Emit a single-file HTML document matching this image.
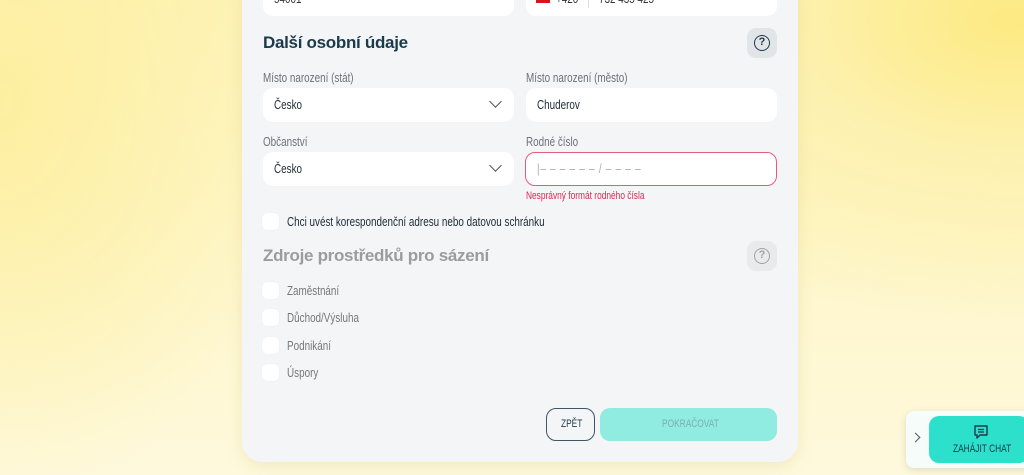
<!DOCTYPE html>
<html><head><meta charset="utf-8"><style>
*{box-sizing:border-box;margin:0;padding:0}
body{width:1024px;height:475px;overflow:hidden;position:relative;font-family:"Liberation Sans",sans-serif;
background:radial-gradient(ellipse 500px 300px at 1010px 20px,#fdea82 0%,#fdf1b0 45%,rgba(253,246,200,0) 100%),radial-gradient(ellipse 300px 400px at 0px 100px,#fdefa0 0%,rgba(253,246,200,0) 100%),linear-gradient(180deg,#fdf3b8 0%,#fef9dc 100%);}
.card{position:absolute;left:242px;top:-40px;width:556px;height:502px;background:#f4f5f7;border-radius:20px;box-shadow:0 4px 14px rgba(200,190,120,.25)}
.n{display:inline-block;transform:scaleX(.76);transform-origin:0 50%;white-space:nowrap}
.in{position:absolute;height:34px;background:#fff;border-radius:10px;font-size:13px;color:#1d2b36;padding-left:11px;line-height:34px}
.lbl{position:absolute;font-size:13px;color:#6b7177}
.chev{position:absolute;right:14px;top:9px;width:9px;height:9px;border-right:1.3px solid #555;border-bottom:1.3px solid #555;transform:rotate(45deg)}
h2{position:absolute;font-family:"Liberation Sans",sans-serif;font-weight:bold;font-size:17px;letter-spacing:-.3px}
.help{position:absolute;width:30px;height:30px;border-radius:9px;background:#e2e5e8;left:747px}
.help span{position:absolute;left:7px;top:7px;width:16px;height:16px;border:1.8px solid #1d3a4a;border-radius:50%;font:bold 11px "Liberation Sans",sans-serif;text-align:center;line-height:13px;color:#1d3a4a}
.cb{position:absolute;left:262px;width:17px;height:17px;border-radius:5px;background:#fff;box-shadow:0 0 1px rgba(0,0,0,.1)}
.ct{position:absolute;left:287px;font-size:13px;color:#1d2b36}
</style></head><body>
<div class="card"></div>
<div class="in" style="left:263px;top:-18px;width:251px;color:#333"><span class="n">54001</span></div>
<div class="in" style="left:526px;top:-18px;width:251px"><span style="position:absolute;left:10px;top:13px;width:14px;height:8px;background:#d7141a"></span><span style="position:absolute;left:30px;color:#333" class="n">+420</span><span style="position:absolute;left:62px;top:8px;width:1px;height:18px;background:#ddd"></span><span style="position:absolute;left:73px;color:#333" class="n">732 435 425</span></div>
<h2 style="left:263px;top:33px;color:#1b3a4b">Další osobní údaje</h2>
<div class="help" style="top:28px"><span>?</span></div>
<div class="lbl" style="left:263px;top:70px"><span class="n">Místo narození (stát)</span></div>
<div class="lbl" style="left:526px;top:70px"><span class="n">Místo narození (město)</span></div>
<div class="in" style="left:263px;top:88px;width:251px"><span class="n">Česko</span><i class="chev"></i></div>
<div class="in" style="left:526px;top:88px;width:251px"><span class="n">Chuderov</span></div>
<div class="lbl" style="left:263px;top:134px"><span class="n">Občanství</span></div>
<div class="lbl" style="left:526px;top:134px"><span class="n">Rodné číslo</span></div>
<div class="in" style="left:263px;top:152px;width:251px"><span class="n">Česko</span><i class="chev"></i></div>
<div class="in" style="left:525px;top:152px;width:252px;border:1.3px solid #e35d78;color:#aaa;line-height:31px"><span class="n" style="letter-spacing:1px">|– – – – – – / – – – –</span></div>
<div style="position:absolute;left:526px;top:190px;font-size:11px;color:#e0294f"><span class="n">Nesprávný formát rodného čísla</span></div>
<div class="cb" style="top:213px"></div><div class="ct" style="top:214px"><span class="n">Chci uvést korespondenční adresu nebo datovou schránku</span></div>
<h2 style="left:263px;top:246px;color:#9a9c9f">Zdroje prostředků pro sázení</h2>
<div class="help" style="top:241px;background:#e9eaec"><span style="border-color:#a0a3a6;color:#a0a3a6">?</span></div>
<div class="cb" style="top:282px"></div><div class="ct" style="top:283px;color:#777"><span class="n">Zaměstnání</span></div>
<div class="cb" style="top:309px"></div><div class="ct" style="top:310px;color:#777"><span class="n">Důchod/Výsluha</span></div>
<div class="cb" style="top:337px"></div><div class="ct" style="top:338px;color:#777"><span class="n">Podnikání</span></div>
<div class="cb" style="top:364px"></div><div class="ct" style="top:365px;color:#777"><span class="n">Úspory</span></div>
<div style="position:absolute;left:546px;top:408px;width:49px;height:33px;border:1.3px solid #3d5766;border-radius:10px;font-size:11px;color:#1d3a4a;line-height:30px;padding-left:14px"><span class="n">ZPĚT</span></div>
<div style="position:absolute;left:600px;top:408px;width:177px;height:33px;background:#90ebe0;border-radius:10px;font-size:11px;color:#7cb0ab;line-height:33px;padding-left:62px"><span class="n">POKRAČOVAT</span></div>
<div style="position:absolute;left:906px;top:411px;width:130px;height:57px;background:#f6fcfa;border-radius:8px;box-shadow:0 2px 8px rgba(0,0,0,.12)"></div>
<div style="position:absolute;left:912px;top:434px;width:7px;height:7px;border-right:1.2px solid #556;border-top:1.2px solid #556;transform:rotate(45deg)"></div>
<div style="position:absolute;left:929px;top:416px;width:100px;height:47px;background:#2de0cc;border-radius:10px"></div>
<svg style="position:absolute;left:973px;top:424px" width="16" height="16" viewBox="0 0 16 16"><path d="M2 2h12v9H7l-3 3v-3H2z" fill="none" stroke="#1d3a4a" stroke-width="1.4" stroke-linejoin="round"/><path d="M5 5.5h6M5 8h6" stroke="#1d3a4a" stroke-width="1.2"/></svg>
<div style="position:absolute;left:953px;top:443px;font-size:11px;color:#1d3a4a"><span class="n">ZAHÁJIT CHAT</span></div>
</body></html>
